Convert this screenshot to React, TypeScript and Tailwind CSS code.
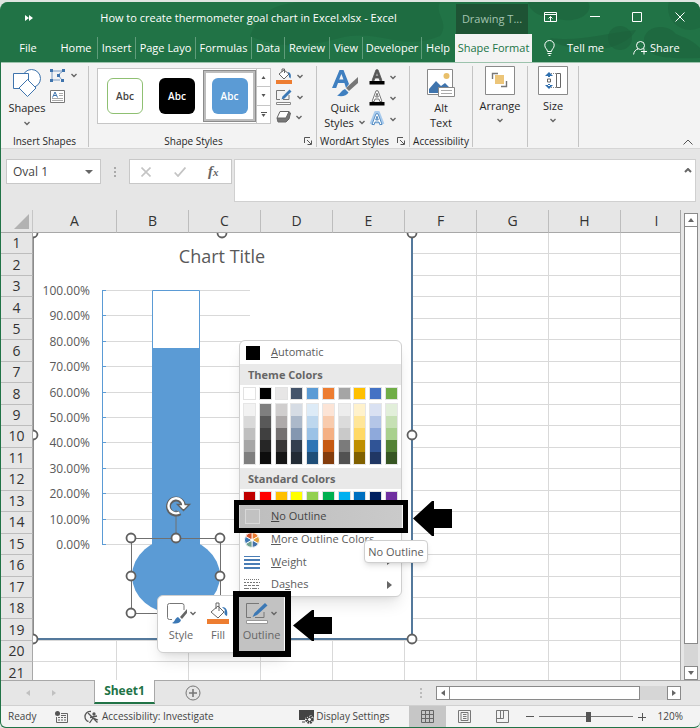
import React from "react";

const CHEVRON = "M1.500 1l2.500 2.500L6.500 1";

function Chevron({ className = "" }: { className?: string }) {
  return (
    <svg viewBox="0 0 8 5" className={`h-[5px] w-2 shrink-0 ${className}`} fill="none" stroke="#666" strokeWidth="1.400">
      <path d={CHEVRON} />
    </svg>
  );
}

function Launcher() {
  return (
    <button aria-label="More options" className="absolute right-1 bottom-[2px] h-2 w-2">
      <svg viewBox="0 0 8 8" className="h-2 w-2" fill="none" stroke="#555">
        <path d="M.5 6V.5H6M3 3l4 4M7.5 3.500v4h-4" />
      </svg>
    </button>
  );
}

const TABS = [
  { name: "Insert", width: "w-[37px]" },
  { name: "Page Layo", width: "w-[59px]" },
  { name: "Formulas", width: "w-[55px]" },
  { name: "Data", width: "w-8" },
  { name: "Review", width: "w-11" },
  { name: "View", width: "w-8" },
  { name: "Developer", width: "w-[58px]" },
  { name: "Help", width: "w-8" },
];

function Header() {
  return (
    <header className="relative shrink-0 overflow-hidden rounded-t-lg bg-[#217346] text-white">
      <svg className="absolute top-0 right-0 h-[60px] w-[450px]" viewBox="0 0 450 60" fill="#1b5f39">
        <path opacity=".35" d="M0 34C10 10 24 0 60 0h130c-6 12 10 20 0 34-40 16-60-8-100 2-30 8-60 12-90-2z" />
        <path opacity=".5" d="M278 0h60c6 10-8 20-24 18-20-2-34-6-36-18zM300 36c30 4 50-4 86-8-8 16-40 24-60 18-14-2-22-4-26-10z" />
        <circle opacity=".5" cx="370" cy="36" r="12" />
        <path opacity=".5" d="M394 36c4-14 24-14 32-4 8 4 14 4 24 14v10c-24 0-56 4-56-20z" />
        <circle opacity=".4" cx="440" cy="6" r="22" />
      </svg>
      <div className="relative flex h-8 items-stretch">
        <button aria-label="Customize Quick Access Toolbar" className="flex w-10 items-center justify-end">
          <svg viewBox="0 0 8 6" className="mr-2 h-[6px] w-2" fill="#fff">
            <path d="M0 0l4 3-4 3zM4 0l4 3-4 3z" />
          </svg>
        </button>
        <h1 className="flex flex-1 items-center justify-center text-[11px] whitespace-nowrap">
          How to create thermometer goal chart in Excel.xlsx - Excel
        </h1>
        <div className="mt-[2px] flex w-[72px] items-center justify-center bg-[#1e5334] text-[11px] text-[#a3c4b0]">Drawing T...</div>
        <div className="flex w-[172px] items-center justify-between pr-[15px] pb-[2px] pl-4">
          <button aria-label="Ribbon display options">
            <svg viewBox="0 0 13 10" className="h-[10px] w-[13px]" fill="none" stroke="#fff">
              <path d="M.5.5h12v9H.5zM.5 2.500h12M6.500 9V4.500M4.500 6.500l2-2 2 2" />
            </svg>
          </button>
          <button aria-label="Minimize">
            <svg viewBox="0 0 10 10" className="h-[10px] w-[10px]" stroke="#fff">
              <path d="M0 4.500h10" />
            </svg>
          </button>
          <button aria-label="Maximize">
            <svg viewBox="0 0 10 10" className="h-[10px] w-[10px]" fill="none" stroke="#fff">
              <path d="M.5.5h9v9h-9z" />
            </svg>
          </button>
          <button aria-label="Close">
            <svg viewBox="0 0 10 10" className="h-[10px] w-[10px]" stroke="#fff">
              <path d="M.5.5l9 9M9.500.5l-9 9" />
            </svg>
          </button>
        </div>
      </div>
      <nav className="relative flex h-7 items-stretch text-[11px]">
        <button className="w-[54px]">File</button>
        <button className="w-[42px] text-center">Home</button>
        {TABS.map((tab) => (
          <div key={tab.name} className="flex items-center">
            <span className="h-[22px] w-px shrink-0 bg-[#5f9c7a]" />
            <button className={`${tab.width} flex justify-center whitespace-nowrap`}>{tab.name}</button>
          </div>
        ))}
        <div className="flex-1" />
        <button className="w-[77px] bg-[#f3f3f3] whitespace-nowrap text-[#217346]">Shape Format</button>
        <button className="ml-3 flex w-[61px] items-center gap-3 whitespace-nowrap">
          <svg viewBox="0 0 11 16" className="h-4 w-[11px] shrink-0" fill="none" stroke="#fff">
            <path d="M3.500 11.500C3.500 9 .8 8.500.8 5.200a4.700 4.700 0 0 1 9.400 0C10.200 8.500 7.500 9 7.500 11.500zM3.500 13.500h4M4.500 15.500h2" />
          </svg>
          Tell me
        </button>
        <button className="mr-[20px] ml-[28px] flex w-[47px] items-center gap-[3px]">
          <svg viewBox="0 0 14 14" className="h-[14px] w-[14px] shrink-0" fill="none" stroke="#fff">
            <circle cx="7.500" cy="4.500" r="4" />
            <path d="M.6 13.500c.4-3 2-5 4.400-5.500M8 10.500h6M11 7.500v6" />
          </svg>
          Share
        </button>
      </nav>
    </header>
  );
}

function FillIcon() {
  return (
    <svg viewBox="0 0 16 16" className="h-4 w-4 shrink-0" fill="none">
      <path d="M3 6l5-4 5 4-5 5z" fill="#fff" stroke="#666" />
      <path d="M6 4V1h2.500v4" stroke="#666" />
      <path d="M11.500 4c3 0 4 3 3 6.500-1.500-.5-2-3-1.500-4.500z" fill="#3b78b5" />
      <path d="M0 12h16v4H0z" fill="#ed7d31" />
    </svg>
  );
}

function PenIcon() {
  return (
    <svg viewBox="0 0 16 16" className="h-4 w-4 shrink-0" fill="none">
      <path d="M9 1.500H.5v9H4M13 6v4.500H7" stroke="#777" />
      <path d="M13.500.5l2 2-7 7-3 1 1-3z" fill="#3b78b5" />
      <path d="M.5 13.500h14v2H.5z" fill="#fff" stroke="#888" />
    </svg>
  );
}

function EffectsIcon() {
  return (
    <svg viewBox="0 0 16 14" className="h-[14px] w-4 shrink-0">
      <path d="M1 8l1 4h8l3-3 1.500-6-2-1.500z" fill="#777" stroke="#666" strokeLinejoin="round" />
      <path d="M1 8l3-6.500h9L10 8z" fill="#fff" stroke="#666" strokeLinejoin="round" />
    </svg>
  );
}

function LetterIcon({ kind }: { kind: "fill" | "outline" | "glow" }) {
  const color = kind === "fill" ? "#555" : "#fff";
  return (
    <svg viewBox="0 0 16 16" className="h-4 w-4 shrink-0">
      {kind === "glow" && (
        <path d="M3 13.500L7.500 2h1L13 13.500M5 10h6" fill="none" stroke="#a9cbed" strokeWidth="5" strokeLinejoin="round" />
      )}
      <path
        d="M3 11.500L7 .8h2L13 11.500h-2.200L10 9H6l-.8 2.500zM6.700 7h2.600L8 3.200z"
        fill={color}
        fillRule="evenodd"
        stroke={kind === "glow" ? "#3b78b5" : "#555"}
        strokeWidth=".8"
        transform={kind === "glow" ? "translate(0 2)" : undefined}
      />
      {kind !== "glow" && <path d="M.5 12h15v3.500H.5z" fill="#000" />}
    </svg>
  );
}

function GroupLabel({ children, className = "" }: { children: string; className?: string }) {
  return <div className={`absolute inset-x-0 -bottom-px text-center text-[10px] leading-[14px] whitespace-nowrap ${className}`}>{children}</div>;
}

const GROUP = "relative h-[81px] shrink-0 border-r border-[#c4c4c4]";

function Ribbon() {
  return (
    <section className="flex h-[87px] shrink-0 items-start border-t border-b border-t-[#9cc3ad] border-b-[#d5d5d5] bg-[#f3f3f3] pt-[3px] text-[#262626]">
      <div className={`${GROUP} w-[88px]`}>
        <button className="absolute top-[3px] left-2 flex w-9 flex-col items-center text-[11px] leading-4">
          <svg viewBox="0 0 28 28" className="h-7 w-7" fill="#fff" stroke="#3f74ad">
            <circle cx="18.500" cy="9.500" r="9" />
            <path d="M.5 4.500h15v15H.5z" />
            <path d="M14.500 10.500l8.500 8.500-8.500 8.500L6 19z" />
          </svg>
          <span className="mt-[3px]">Shapes</span>
          <Chevron className="mt-[5px]" />
        </button>
        <button aria-label="Edit shape" className="absolute top-[3px] left-[49px] flex items-center gap-[5px]">
          <svg viewBox="0 0 15 13" className="h-[13px] w-[15px]" fill="none">
            <path d="M2 2l11 0M2 2v9M2 11h8M13 2L8 6l4 5" stroke="#7a9cc4" />
            <path d="M0 0h3v3H0zM0 10h3v3H0zM12 0h3v3h-3zM11 10h3v3h-3zM7 5h3v3H7z" fill="#3f74ad" />
          </svg>
          <Chevron />
        </button>
        <button aria-label="Text box" className="absolute top-6 left-[49px]">
          <svg viewBox="0 0 15 13" className="h-[13px] w-[15px]" fill="none" stroke="#777">
            <path d="M.5.5h14v12H.5z" fill="#fff" />
            <path d="M9 3.500h4M9 5.500h4M2 8.500h11M2 10.500h11" stroke="#aaa" />
            <path d="M2.500 7.500L5 2l2.500 5.500M3.500 5.500h3" stroke="#3f74ad" />
          </svg>
        </button>
        <GroupLabel>Insert Shapes</GroupLabel>
      </div>

      <div className={`${GROUP} w-[228px]`}>
        <div className="absolute top-[2px] left-2 flex h-14 w-[174px] border border-[#c6c6c6] bg-white">
          <div className="flex flex-1 items-center text-[10px] leading-none font-semibold">
            <button className="ml-[9px] h-9 w-9 rounded-md border border-[#8fc072] bg-white text-[#444]">Abc</button>
            <button className="ml-4 h-9 w-9 rounded-md bg-black text-white">Abc</button>
            <div className="ml-2 flex h-[52px] w-[53px] items-center justify-center border border-[#8c8c8c] bg-[#bdbdbd] p-[2px]">
              <div className="flex h-full w-full items-center justify-center bg-white">
                <button className="h-9 w-9 rounded-md bg-[#5b9bd5] text-white">Abc</button>
              </div>
            </div>
          </div>
          <div className="flex w-[14px] flex-col divide-y divide-[#c6c6c6] border-l border-[#c6c6c6]">
            {["M0 3l2-3 2 3z", "M0 0h4L2 3z", "M0 0h4L2 3z"].map((d, i) => (
              <button key={i} aria-label={["Scroll up", "Scroll down", "More styles"][i]} className="flex flex-1 flex-col items-center justify-center gap-px">
                {i === 2 && <span className="h-px w-[6px] bg-[#555]" />}
                <svg viewBox="0 0 4 3" className="h-[3px] w-[5px]" fill="#555">
                  <path d={d} />
                </svg>
              </button>
            ))}
          </div>
        </div>
        <div className="absolute top-[2px] left-[187px] flex flex-col gap-[5px]">
          <button aria-label="Shape fill" className="flex items-center gap-1">
            <FillIcon />
            <Chevron />
          </button>
          <button aria-label="Shape outline" className="flex items-center gap-1">
            <PenIcon />
            <Chevron />
          </button>
          <button aria-label="Shape effects" className="flex items-center gap-[3px]">
            <EffectsIcon />
            <Chevron />
          </button>
        </div>
        <GroupLabel className="pr-[18px]">Shape Styles</GroupLabel>
        <Launcher />
      </div>

      <div className={`${GROUP} w-[93px]`}>
        <button className="absolute top-[3px] left-2 flex w-10 flex-col items-center text-[11px] leading-[15px]">
          <svg viewBox="0 0 28 28" className="h-7 w-7" fill="none">
            <path d="M1 19L8.500 1h4l5.500 14-3 4-1.600-5H7l-1.800 5zM8.200 10.500h4.300L10.400 5z" fill="#3f7fc0" fillRule="evenodd" />
            <path d="M27 8v6l-9 8-3-3z" fill="#777" />
            <path d="M14 20l3.500 3.500C16 27 10 28 6 26.500c3-1 4-5 8-6.500z" fill="#3f7fc0" />
          </svg>
          <span className="mt-[3px]">Quick</span>
          <span className="flex items-center gap-1">
            Styles <Chevron />
          </span>
        </button>
        <div className="absolute top-[3px] left-[52px] flex flex-col gap-[5px]">
          <button aria-label="Text fill" className="flex items-center gap-1">
            <LetterIcon kind="fill" />
            <Chevron />
          </button>
          <button aria-label="Text outline" className="flex items-center gap-1">
            <LetterIcon kind="outline" />
            <Chevron />
          </button>
          <button aria-label="Text effects" className="flex items-center gap-1">
            <LetterIcon kind="glow" />
            <Chevron />
          </button>
        </div>
        <GroupLabel className="pr-[17px]">WordArt Styles</GroupLabel>
        <Launcher />
      </div>

      <div className={`${GROUP} w-[63px]`}>
        <button className="absolute inset-x-0 top-[3px] flex flex-col items-center text-[11px] leading-[15px]">
          <svg viewBox="0 0 28 28" className="h-7 w-7" fill="none">
            <path d="M.5.5h25v25H.5z" fill="#fff" stroke="#888" />
            <circle cx="19.500" cy="7" r="3" fill="#e8bf6a" />
            <path d="M2 24v-4l7-8 5 5 4-3 5 5v5z" fill="#3f74ad" />
            <path d="M11.500 18.500h16v9h-16z" fill="#fff" stroke="#888" />
            <path d="M14 21.500h11M14 24.500h11" stroke="#aaa" />
          </svg>
          <span className="mt-[3px]">Alt</span>
          <span>Text</span>
        </button>
        <GroupLabel>Accessibility</GroupLabel>
      </div>

      <div className={`${GROUP} w-[55px]`}>
        <button className="absolute inset-x-0 top-0 flex flex-col items-center text-[11px] leading-4">
          <svg viewBox="0 0 30 29" className="h-[29px] w-[30px]" fill="none" stroke="#777">
            <path d="M.5.5h29v28H.5z" fill="#fff" stroke="#8a8a8a" />
            <path d="M7.500 13V7.500H13M21.500 15v5.500H16" strokeWidth="1.400" />
            <path d="M10 9h9v9h-9z" fill="#ecc579" stroke="none" />
          </svg>
          <span className="mt-[3px]">Arrange</span>
          <Chevron className="mt-1" />
        </button>
      </div>

      <div className={`${GROUP} w-[51px]`}>
        <button className="absolute inset-x-0 top-0 flex flex-col items-center text-[11px] leading-4">
          <svg viewBox="0 0 30 29" className="h-[29px] w-[30px]" fill="none">
            <path d="M.5.5h29v28H.5z" fill="#fff" stroke="#8a8a8a" />
            <path d="M18.500 7.500h4v14h-4zM9.500 13h3v3h-3z" stroke="#666" />
            <path d="M13 7.500h5M13 21.500h5" stroke="#888" strokeDasharray="1 1" />
            <path d="M11 6l4 4h-8zM11 23l4-4h-8zM10 9h2v2h-2zM10 18h2v2h-2z" fill="#2f6fae" />
          </svg>
          <span className="mt-[3px]">Size</span>
          <Chevron className="mt-1" />
        </button>
      </div>

      <button aria-label="Collapse the ribbon" className="mr-[7px] mb-[3px] ml-auto self-end">
        <svg viewBox="0 0 10 6" className="h-[6px] w-[10px]" fill="none" stroke="#555">
          <path d="M.5 5.500L5 1l4.500 4.500" />
        </svg>
      </button>
    </section>
  );
}

function FormulaBar() {
  return (
    <section className="flex h-[61px] shrink-0 items-start bg-[#e6e6e6] pt-[10px] pr-1 pl-[5px]">
      <div className="flex h-[25px] w-[95px] items-center border border-[#c8c8c8] bg-white pr-[7px] pl-[6px]">
        <input aria-label="Name box" defaultValue="Oval 1" className="w-full min-w-0 bg-transparent text-[12px] text-[#444] outline-none" />
        <svg viewBox="0 0 8 4" className="h-1 w-2 shrink-0" fill="#666">
          <path d="M0 0h8L4 4z" />
        </svg>
      </div>
      <div className="ml-[13px] flex h-[25px] flex-col justify-center gap-[2px]">
        <span className="h-[2px] w-[2px] bg-[#aaa]" />
        <span className="h-[2px] w-[2px] bg-[#aaa]" />
        <span className="h-[2px] w-[2px] bg-[#aaa]" />
      </div>
      <div className="ml-[13px] flex h-[25px] w-[103px] shrink-0 items-center border border-[#c8c8c8] bg-white pl-[11px]">
        <button aria-label="Cancel">
          <svg viewBox="0 0 10 10" className="h-[10px] w-[10px]" stroke="#c4c4c4" strokeWidth="1.600">
            <path d="M.5.5l9 9M9.500.5l-9 9" />
          </svg>
        </button>
        <button aria-label="Enter" className="ml-[23px]">
          <svg viewBox="0 0 12 10" className="h-[10px] w-3" fill="none" stroke="#c4c4c4" strokeWidth="1.800">
            <path d="M.7 5.500L4 9l7.500-8.500" />
          </svg>
        </button>
        <button aria-label="Insert function" className="ml-[22px] font-['Liberation_Serif',serif] text-[15px] leading-4 font-bold text-[#666] italic">
          f<span className="text-[11px]">x</span>
        </button>
      </div>
      <div className="ml-[2px] flex h-[43px] flex-1 border border-[#d0d0d0] bg-white">
        <textarea aria-label="Formula bar" className="h-full flex-1 resize-none outline-none" />
        <button aria-label="Collapse formula bar" className="mt-2 mr-[3px] h-1 w-2">
          <svg viewBox="0 0 8 5" className="h-[5px] w-2" fill="none" stroke="#666" strokeWidth="2">
            <path d="M1 4l3-3 3 3" />
          </svg>
        </button>
      </div>
    </section>
  );
}

const COLUMNS = ["A", "B", "C", "D", "E", "F", "G", "H", "I"];
const ROWS = Array.from({ length: 21 }, (_, i) => i + 1);

function Grid() {
  return (
    <table className="h-[474px] w-[692px] table-fixed border-separate border-spacing-0 text-[14px] leading-[18px] text-[#333]">
      <colgroup>
        <col className="w-8" />
        <col className="w-[84px]" />
        {COLUMNS.slice(1).map((c) => (
          <col key={c} className="w-[72px]" />
        ))}
      </colgroup>
      <thead>
        <tr className="h-[23px] bg-[#e6e6e6]">
          <th aria-label="Select all" className="border-r border-b border-r-[#c6c6c6] border-b-[#a8a8a8] p-0">
            <svg viewBox="0 0 15 15" className="ml-[13px] h-[15px] w-[15px]" fill="#b2b2b2">
              <path d="M15 0v15H0z" />
            </svg>
          </th>
          {COLUMNS.map((c) => (
            <th key={c} className="border-r border-b border-r-[#bdbdbd] border-b-[#a8a8a8] p-0 font-normal">
              {c}
            </th>
          ))}
        </tr>
      </thead>
      <tbody>
        {ROWS.map((r) => (
          <tr key={r}>
            <th className="border-r border-b border-r-[#a8a8a8] border-b-[#bdbdbd] bg-[#e6e6e6] p-0 font-normal">{r}</th>
            {COLUMNS.map((c) => (
              <td key={c} className="border-r border-b border-[#d9d9d9] p-0" />
            ))}
          </tr>
        ))}
      </tbody>
    </table>
  );
}

function Handle({ x, y }: { x: number; y: number }) {
  return <circle cx={x} cy={y} r="4.500" fill="#fff" stroke="#606060" strokeWidth="1.800" />;
}

const AXIS = [100, 90, 80, 70, 60, 50, 40, 30, 20, 10, 0];

function ThermometerChart() {
  return (
    <svg className="absolute top-[23px] left-8 h-[412px] w-[390px]" viewBox="33 233 390 412">
      <rect x="33" y="233" width="379" height="406" fill="#fff" />
      <path d="M33 639h379M412 233v406" stroke="#54799c" strokeWidth="2" />
      <path d="M33.500 233v406" stroke="#8c8c8c" />
      <text x="222" y="263" textAnchor="middle" fontSize="18" fill="#595959">
        Chart Title
      </text>
      {AXIS.map((v, i) => {
        const y = Math.round(290 + i * 25.4) + 0.5;
        return (
          <g key={v}>
            <text x="90" y={y + 4} textAnchor="end" fontSize="12" fill="#595959">
              {v}.00%
            </text>
            <path d={`M102 ${y}H250`} stroke="#d9d9d9" />
            <path d={`M102 ${y}h4`} stroke="#5b9bd5" />
          </g>
        );
      })}
      <path d="M102.500 290v254" stroke="#5b9bd5" />
      <path d="M152.500 290.500h47v254h-47z" fill="#fff" stroke="#5b9bd5" />
      <path d="M152 348h48v200h-48z" fill="#5b9bd5" />
      <ellipse cx="176" cy="576" rx="44" ry="38" fill="#5b9bd5" />
      <path d="M131.500 538.500h89v75h-89zM176 510v28" fill="none" stroke="#707070" />
      {[131, 176, 220].map((x) => (
        <Handle key={x} x={x} y={538} />
      ))}
      <Handle x={131} y={576} />
      <Handle x={220} y={576} />
      <Handle x={131} y={613} />
      <path d="M180 512.900A7.500 7.500 0 1 1 183.500 506" fill="none" stroke="#606060" strokeWidth="5" />
      <path d="M177.500 504.500h12l-6 6z" fill="#fff" stroke="#606060" strokeWidth="1.400" />
      <path d="M179.400 512.500A7.500 7.500 0 1 1 183.500 506" fill="none" stroke="#fff" strokeWidth="2.400" />
      <Handle x={33} y={233} />
      <Handle x={222} y={233} />
      <Handle x={412} y={233} />
      <Handle x={33} y={435} />
      <Handle x={412} y={435} />
      <Handle x={33} y={639} />
      <Handle x={412} y={639} />
    </svg>
  );
}

const THEME = [
  ["#ffffff", "#f2f2f2", "#d9d9d9", "#bfbfbf", "#a6a6a6", "#7f7f7f"],
  ["#000000", "#7f7f7f", "#595959", "#404040", "#262626", "#0d0d0d"],
  ["#e7e6e6", "#d0cece", "#aeaaaa", "#757171", "#3a3838", "#161616"],
  ["#44546a", "#d6dce4", "#acb9ca", "#8497b0", "#333f4f", "#222b35"],
  ["#5b9bd5", "#ddebf7", "#bdd7ee", "#9bc2e6", "#2f75b5", "#1f4e78"],
  ["#ed7d31", "#fce4d6", "#f8cbad", "#f4b084", "#c65911", "#833c0c"],
  ["#a5a5a5", "#ededed", "#dbdbdb", "#c9c9c9", "#7b7b7b", "#525252"],
  ["#ffc000", "#fff2cc", "#ffe699", "#ffd966", "#bf8f00", "#806000"],
  ["#4472c4", "#d9e1f2", "#b4c6e7", "#8ea9db", "#305496", "#203764"],
  ["#70ad47", "#e2efda", "#c6e0b4", "#a9d08e", "#548235", "#375623"],
];
const STANDARD = ["#c00000", "#ff0000", "#ffc000", "#ffff00", "#92d050", "#00b050", "#00b0f0", "#0070c0", "#002060", "#7030a0"];

function Swatch({ color }: { color: string }) {
  return <button aria-label={color} className="h-[11px] w-[11px] outline outline-[#e2e2e2]" style={{ backgroundColor: color }} />;
}

function OutlineMenu() {
  return (
    <div className="absolute top-[130px] left-[238px] w-[163px] rounded-md border border-[#cfcfcf] bg-white text-[11px] text-[#5c5c5c] shadow-lg">
      <button className="flex h-[23px] w-full items-center pl-[6px]">
        <span className="h-[14px] w-[14px] bg-black" />
        <span className="ml-[11px]">
          <u>A</u>utomatic
        </span>
      </button>
      <h2 className="h-[21px] bg-[#e9e9e9] pl-2 text-[11px] leading-[21px] font-bold text-[#666]">Theme Colors</h2>
      <div className="flex justify-between px-1 pt-[3px]">
        {THEME.map((c) => (
          <Swatch key={c[0]} color={c[0]} />
        ))}
      </div>
      <div className="flex justify-between px-1 pt-[5px] pb-1">
        {THEME.map((shades) => (
          <div key={shades[0]} className="flex w-[11px] flex-col outline outline-[#e6e6e6]">
            {shades.slice(1).map((c) => (
              <button key={c} aria-label={c} className="h-3" style={{ backgroundColor: c }} />
            ))}
          </div>
        ))}
      </div>
      <h2 className="h-[21px] bg-[#e9e9e9] pl-2 text-[11px] leading-[21px] font-bold text-[#666]">Standard Colors</h2>
      <div className="flex justify-between px-1 pt-[3px] pb-px">
        {STANDARD.map((c) => (
          <Swatch key={c} color={c} />
        ))}
      </div>
      <button className="flex h-6 w-full items-center bg-linear-to-r from-[#bdbdbd] to-[#cacaca] pl-[5px] text-[#444]">
        <span className="h-[15px] w-[15px] border border-[#d8d8d8] bg-[#c2c2c2]" />
        <span className="ml-[11px]">
          <u>N</u>o Outline
        </span>
      </button>
      <button className="flex h-[23px] w-full items-center pl-1">
        <svg viewBox="-8 -8 16 16" className="h-4 w-4">
          {["#ed7d31", "#e2a13a", "#4472a8", "#6fa08f", "#3b78b5", "#d0542f"].map((c, i) => (
            <path key={c} d="M0 0V-7.500A7.500 7.500 0 0 1 6.500-3.750z" fill={c} stroke="#fff" strokeWidth=".8" transform={`rotate(${i * 60})`} />
          ))}
          <circle r="1.500" fill="#fff" />
        </svg>
        <span className="ml-[11px] whitespace-nowrap">
          <u>M</u>ore Outline Colors...
        </span>
      </button>
      <button className="flex h-[22px] w-full items-center pl-1">
        <svg viewBox="0 0 16 14" className="h-[14px] w-4" fill="#4a7db5">
          <path d="M0 1h16v1H0zM0 4h16v2H0zM0 8h16v2H0zM0 12h16v2H0z" />
        </svg>
        <span className="ml-[11px] flex-1 text-left">
          <u>W</u>eight
        </span>
        <span className="mr-[10px] h-0 w-0 border-y-[3px] border-l-4 border-y-transparent border-l-[#666]" />
      </button>
      <button className="flex h-[23px] w-full items-center pl-1">
        <svg viewBox="0 0 16 12" className="h-3 w-4" fill="none" stroke="#777">
          <path d="M0 .5h16" strokeDasharray="1 1" />
          <path d="M0 3.500h16" strokeDasharray="2 1" />
          <path d="M0 6.500h16" strokeDasharray="3 1" />
          <path d="M0 9.500h16" strokeDasharray="5 1 1 1" />
        </svg>
        <span className="ml-[11px] flex-1 text-left">
          Da<u>s</u>hes
        </span>
        <span className="mr-[9px] h-0 w-0 border-y-[4px] border-l-[5px] border-y-transparent border-l-[#666]" />
      </button>
    </div>
  );
}

function MiniToolbar() {
  return (
    <div className="absolute top-[385px] left-[156px] flex h-[58px] w-[130px] items-start rounded-md border border-[#cfcfcf] bg-white text-[11px] leading-4 text-[#666] shadow-lg">
      <button className="mt-[6px] ml-2 flex w-[30px] flex-col items-center">
        <span className="flex items-center gap-px">
          <svg viewBox="0 0 22 22" className="h-[22px] w-[22px]" fill="none">
            <path d="M18 8V3.500a2 2 0 0 0-2-2H3.500a2 2 0 0 0-2 2v12a2 2 0 0 0 2 2H6" stroke="#777" />
            <path d="M21 7v4l-5 6-2-2z" fill="#666" />
            <path d="M12 15l3 3c-1 4-6 4-9 3 3-1 3-5 6-6z" fill="#3b78b5" />
          </svg>
          <Chevron />
        </span>
        <span className="mt-[3px]">Style</span>
      </button>
      <button className="mt-[6px] ml-[9px] flex w-[26px] flex-col items-center">
        <svg viewBox="0 0 22 22" className="h-[22px] w-[22px]" fill="none">
          <path d="M4 10l7-6 6 6-6 6z" fill="#fff" stroke="#666" />
          <path d="M9 7V1h3v8" stroke="#666" />
          <path d="M15 5c5 0 6 5 5 9-3-1-3-4-2-6z" fill="#3b78b5" />
          <path d="M0 17h22v5H0z" fill="#ed7d31" />
        </svg>
        <span className="mt-[3px]">Fill</span>
      </button>
      <button className="mt-px ml-2 flex h-[54px] w-[45px] flex-col items-center bg-[#c2c2c2] pt-[5px]">
        <span className="flex items-center gap-px">
          <svg viewBox="0 0 24 22" className="h-[22px] w-6" fill="none">
            <path d="M14 1.500H1.500v14H6M19 10v5.500h-9" stroke="#777" />
            <path d="M20 1l2.500 2.500L12 13l-4.500 2L9.500 11z" fill="#3b78b5" />
            <path d="M1.500 18.500h21v3h-21z" fill="#fff" stroke="#999" />
          </svg>
          <Chevron />
        </span>
        <span className="mt-[3px]">Outline</span>
      </button>
    </div>
  );
}

function ScrollButton({ label, d, className = "" }: { label: string; d: string; className?: string }) {
  return (
    <button aria-label={label} className={`flex h-[14px] w-[14px] shrink-0 items-center justify-center border border-[#8a8a8a] bg-white ${className}`}>
      <svg viewBox="0 0 6 6" className="h-[6px] w-[6px]" fill="#666">
        <path d={d} />
      </svg>
    </button>
  );
}

function Worksheet() {
  return (
    <main className="relative z-10 flex min-h-0 flex-1 bg-[#e6e6e6]">
      <div className="relative min-w-0 flex-1 overflow-hidden border-r border-[#a8a8a8] bg-white">
        <Grid />
        <ThermometerChart />
      </div>
      <div className="flex w-[19px] shrink-0 flex-col items-center pt-[3px]">
        <ScrollButton label="Scroll up" d="M0 5h6L3 1z" />
        <div className="flex min-h-0 w-[14px] flex-1 flex-col bg-[#d6d6d6] pb-[22px]">
          <div className="flex-1 border border-t-0 border-[#8a8a8a] bg-white" />
        </div>
        <ScrollButton label="Scroll down" d="M0 1h6L3 5z" />
      </div>
      <OutlineMenu />
      <MiniToolbar />
      <div role="tooltip" className="absolute top-[330px] left-[363px] h-[23px] w-16 rounded border border-[#cfcfcf] bg-white text-center text-[11px] leading-[21px] whitespace-nowrap text-[#5c5c5c] shadow-md">
        No Outline
      </div>
      <div className="absolute top-[290px] left-[233px] h-[33px] w-[174px] border-[5px] border-black" />
      <svg className="absolute top-[291px] left-[412px] h-[35px] w-[39px]" viewBox="0 0 39 35">
        <path d="M0 17.500L19 0h2v8h18v19H21v8h-2z" />
      </svg>
      <div className="absolute top-[381px] left-[232px] h-[66px] w-[58px] border-[6px] border-black" />
      <svg className="absolute top-[400px] left-[292px] h-[31px] w-[39px]" viewBox="0 0 39 31">
        <path d="M0 15.500L19 0h2v7h18v17H21v7h-2z" />
      </svg>
    </main>
  );
}

function SheetTabs() {
  return (
    <div className="flex h-[26px] shrink-0 items-start border-t border-b border-t-[#a8a8a8] border-b-[#d0d0d0] bg-[#e6e6e6]">
      <div className="flex h-[23px] w-[93px] items-center gap-[22px] pl-[25px]">
        <button aria-label="Previous sheet" className="h-0 w-0 border-y-[3px] border-r-4 border-y-transparent border-r-[#c0c0c0]" />
        <button aria-label="Next sheet" className="h-0 w-0 border-y-[3px] border-l-4 border-y-transparent border-l-[#c0c0c0]" />
      </div>
      <button className="-mt-px h-6 w-[61px] border-x border-b-2 border-x-[#a8a8a8] border-b-[#217346] bg-white text-[12px] leading-5 font-bold text-[#217346]">
        Sheet1
      </button>
      <button aria-label="New sheet" className="mt-[4px] ml-[30px]">
        <svg viewBox="0 0 16 16" className="h-4 w-4" fill="none" stroke="#777">
          <circle cx="8" cy="8" r="7" />
          <path d="M4 8h8M8 4v8" strokeWidth="1.600" />
        </svg>
      </button>
      <div className="mt-[7px] mr-[14px] ml-auto flex flex-col gap-[2px]">
        <span className="h-[2px] w-[2px] bg-[#bbb]" />
        <span className="h-[2px] w-[2px] bg-[#bbb]" />
        <span className="h-[2px] w-[2px] bg-[#bbb]" />
      </div>
      <div className="mt-[5px] mr-[19px] flex w-[35%] bg-[#d6d6d6]">
        <ScrollButton label="Scroll left" d="M5 0v6L1 3z" />
        <div className="mr-[27px] h-[14px] flex-1 border border-l-0 border-[#8a8a8a] bg-white" />
        <ScrollButton label="Scroll right" d="M1 0v6l4-3z" />
      </div>
    </div>
  );
}

function StatusBar() {
  return (
    <footer className="flex h-[21px] shrink-0 items-center bg-[#f3f3f3] text-[10px] whitespace-nowrap text-[#444]">
      <span className="w-[54px] pl-[7px]">Ready</span>
      <button aria-label="Record macro" className="w-[29px]">
        <svg viewBox="0 0 13 12" className="h-3 w-[13px]" fill="none" stroke="#666">
          <path d="M6 2.500h6.500v9h-11V6M3 6.500h2M6 6.500h2M9 6.500h2M3 9h2M6 9h2M9 9h2M6 4.500h5" />
          <circle cx="2.500" cy="2.500" r="2.500" fill="#555" stroke="none" />
        </svg>
      </button>
      <button className="flex items-center gap-[3px]">
        <svg viewBox="0 0 15 14" className="h-[14px] w-[15px]" fill="none" stroke="#555" strokeWidth="1.300">
          <path d="M7 1.500C3 1 .8 4 1 7c.2 2 1.500 4 3.500 4.500M4 3l9.500 9.500M6 7.500l7-1.500M9 8l-3.500 5M9 8l5 2" />
          <circle cx="10" cy="4" r="1" fill="#555" />
        </svg>
        Accessibility: Investigate
      </button>
      <button className="ml-auto flex items-center gap-px">
        <svg viewBox="0 0 16 14" className="h-[14px] w-4">
          <path d="M0 0h15v8l-3-3-6 3v2H0z" fill="#444" />
          <path d="M3 12h3" stroke="#444" />
          <circle cx="10.500" cy="9.500" r="3" fill="none" stroke="#444" strokeWidth="2.600" strokeDasharray="1.700 .7" />
          <circle cx="10.500" cy="9.500" r="2" fill="none" stroke="#444" />
        </svg>
        Display Settings
      </button>
      <button aria-label="Normal view" className="ml-[19px] flex h-full w-[37px] items-center justify-center bg-[#c6c6c6]">
        <svg viewBox="0 0 13 13" className="h-[13px] w-[13px]" fill="none" stroke="#666">
          <path d="M.5.5h12v12H.5zM.5 4.500h12M.5 8.500h12M4.500.5v12M8.500.5v12" />
        </svg>
      </button>
      <button aria-label="Page layout view" className="ml-3">
        <svg viewBox="0 0 13 13" className="h-[13px] w-[13px]" fill="none" stroke="#777">
          <path d="M.5.5h12v12H.5zM3 2.500h7v8H3zM5 4.500h3.500M5 6.500h3.500M5 8.500h3.500" />
        </svg>
      </button>
      <button aria-label="Page break preview" className="ml-[25px]">
        <svg viewBox="0 0 13 13" className="h-[13px] w-[13px]" fill="none" stroke="#777">
          <path d="M.5.5h12v12H.5zM4.500.5v8M.5 8.500h7M7.500.5v8" />
        </svg>
      </button>
      <button aria-label="Zoom out" className="ml-[17px] h-px w-2 bg-[#555]" />
      <input
        type="range"
        aria-label="Zoom"
        min={10}
        max={230}
        defaultValue={128}
        className="mx-[5px] h-[11px] w-[94px] appearance-none bg-[linear-gradient(#777,#777)] bg-size-[100%_1px] bg-center bg-no-repeat [&::-webkit-slider-thumb]:h-[10px] [&::-webkit-slider-thumb]:w-[5px] [&::-webkit-slider-thumb]:appearance-none [&::-webkit-slider-thumb]:bg-[#555]"
      />
      <button aria-label="Zoom in">
        <svg viewBox="0 0 8 8" className="h-2 w-2" stroke="#555">
          <path d="M0 4.500h8M4.500 0v8" />
        </svg>
      </button>
      <span className="mr-[17px] ml-3">120%</span>
    </footer>
  );
}

export default function App() {
  return (
    <div className="h-screen bg-[#dfe5e1] pt-[2px] font-['Open_Sans','Noto_Sans',sans-serif]">
      <div className="flex h-full flex-col overflow-hidden rounded-t-lg rounded-b-md border-b border-l border-[#217346] bg-[#217346]">
        <Header />
        <Ribbon />
        <FormulaBar />
        <Worksheet />
        <SheetTabs />
        <StatusBar />
      </div>
    </div>
  );
}
